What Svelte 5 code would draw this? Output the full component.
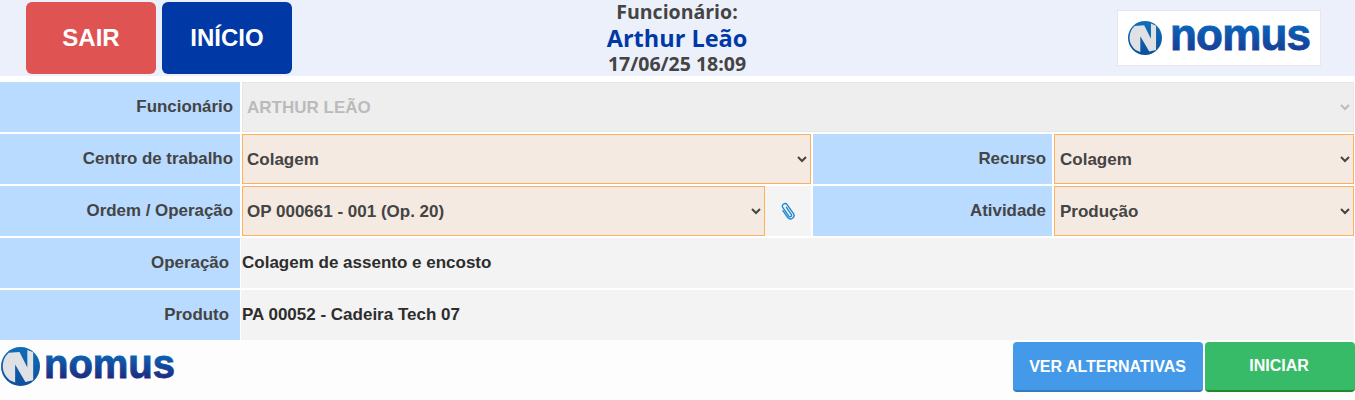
<script>
	let now = '17/06/25 18:09';
</script>

{#snippet logo(kind, w, h, base, size, len, from, to)}
	<div class="logo {kind}">
		<svg class="mark" viewBox="0 0 40 40">
			<defs>
				<linearGradient id="ring-{kind}" x1="0" y1="0" x2="0" y2="1">
					<stop offset="0" stop-color="#0f6fb8" />
					<stop offset="1" stop-color="#0d4f9e" />
				</linearGradient>
			</defs>
			<circle cx="20" cy="20" r="20" fill="url(#ring-{kind})" />
			<path d="M8 6 L19 5 L27 21 L27 3 L33 5.500 L33 34 L25 36 L14.500 18 L14.500 36.500 L9 34 A18 18 0 0 1 8 6 Z" fill="#dfe1e5" />
		</svg>
		<svg class="word" width={w} height={h}>
			<defs>
				<linearGradient id="word-{kind}" gradientUnits="userSpaceOnUse" x1="0" y1={base - size * 0.53} x2="0" y2={base}>
					<stop offset="0" stop-color={from} />
					<stop offset="1" stop-color={to} />
				</linearGradient>
			</defs>
			<text
				x="-2"
				y={base}
				font-size={size}
				textLength={len}
				lengthAdjust="spacing"
				fill="url(#word-{kind})"
				stroke="url(#word-{kind})"
				stroke-width="0.9">nomus</text>
		</svg>
	</div>
{/snippet}

<div class="page">
	<header class="top">
		<div class="top-actions">
			<button class="big sair">SAIR</button>
			<button class="big inicio">INÍCIO</button>
		</div>
		<div class="who">
			<div class="who-label">Funcionário:</div>
			<div class="who-name">Arthur Leão</div>
			<div class="who-date">{now}</div>
		</div>
		<div class="logo-box">
			{@render logo('small', 140, 30, 26, 44, 141, '#0b62b8', '#163f98')}
		</div>
	</header>

	<main class="form">
		<label class="lbl" for="func">Funcionário</label>
		<select id="func" class="sel wide" disabled>
			<option>ARTHUR LEÃO</option>
		</select>

		<label class="lbl" for="centro">Centro de trabalho</label>
		<select id="centro" class="sel">
			<option>Colagem</option>
		</select>
		<label class="lbl side" for="recurso">Recurso</label>
		<select id="recurso" class="sel side-sel">
			<option>Colagem</option>
		</select>

		<label class="lbl" for="ordem">Ordem / Operação</label>
		<div class="with-clip">
			<select id="ordem" class="sel">
				<option>OP 000661 - 001 (Op. 20)</option>
			</select>
			<div class="clip">
				<svg viewBox="0 0 18 20" width="17" height="18" fill="none" stroke="#1b87d2" stroke-width="1.500" stroke-linecap="round" stroke-linejoin="round">
					<path d="M7.500 6.500 L13 14.500 A1.700 1.700 0 0 1 10.200 16.400 L3.400 6.600 A2.900 2.900 0 0 1 8.200 3.400 L15.400 13.600 A3.900 3.900 0 0 1 9 18 L3.600 10.200" transform="translate(0.300 -0.600)" />
				</svg>
			</div>
		</div>
		<label class="lbl side" for="atividade">Atividade</label>
		<select id="atividade" class="sel side-sel">
			<option>Produção</option>
		</select>

		<div class="lbl inset">Operação</div>
		<div class="val">Colagem de assento e encosto</div>

		<div class="lbl inset">Produto</div>
		<div class="val">PA 00052 - Cadeira Tech 07</div>
	</main>

	<footer class="bottom">
		{@render logo('large', 132, 26, 24, 40, 131, '#0e5fb0', '#1c2c80')}
		<div class="bottom-actions">
			<button class="act alt">VER ALTERNATIVAS</button>
			<button class="act go">INICIAR</button>
		</div>
	</footer>
</div>

<style>
	:global(body) {
		margin: 0;
		background: #fff;
	}

	.page {
		width: 1355px;
		height: 400px;
		overflow: hidden;
		font-family: 'Liberation Sans', Arial, sans-serif;
		color: #444;
		background: #fff;
	}

	.top {
		height: 76px;
		background: #ecf0fb;
		display: grid;
		grid-template-columns: 1fr 300px 1fr;
		align-items: start;
	}

	.top-actions {
		display: flex;
		gap: 6px;
		padding: 2px 0 0 26px;
	}

	.big {
		width: 130px;
		height: 72px;
		border: none;
		border-radius: 6px;
		color: #fff;
		font: bold 24px 'Liberation Sans', Arial, sans-serif;
		padding: 0;
	}

	.sair {
		background: #df5353;
	}

	.inicio {
		background: #0039a6;
	}

	.who {
		text-align: center;
		font-family: 'Open Sans', sans-serif;
		font-weight: 700;
		font-size: 19.5px;
		line-height: 24px;
		color: #444;
		margin-left: -1px;
	}

	.who-name {
		font-size: 23.5px;
		line-height: 28px;
		color: #0039a6;
	}

	.who-date {
		line-height: 24px;
	}

	.logo-box {
		justify-self: end;
		margin: 10px 34px 0 0;
		box-sizing: border-box;
		width: 204px;
		height: 56px;
		background: #fff;
		border: 1px solid #e6e8ee;
		padding-left: 10px;
	}

	.logo {
		display: flex;
		align-items: flex-start;
	}

	.word {
		overflow: visible;
		font-family: 'Liberation Sans', Arial, sans-serif;
		font-weight: 700;
	}

	.small .mark {
		width: 34px;
		height: 34px;
		margin-top: 10px;
	}

	.small .word {
		margin: 13px 0 0 10px;
	}

	.large .mark {
		width: 39px;
		height: 39px;
		margin-top: 7px;
	}

	.large .word {
		margin: 14px 0 0 6px;
	}

	.form {
		margin-top: 6px;
		display: grid;
		grid-template-columns: 240px 569px 239px 300px;
		grid-auto-rows: 50px;
		column-gap: 2px;
		row-gap: 2px;
		width: 1354px;
		font-size: 17px;
		font-weight: 700;
	}

	.lbl {
		background: #b8dbff;
		color: #444;
		font-size: 16.9px;
		display: flex;
		align-items: center;
		justify-content: flex-end;
		padding-right: 7px;
	}

	.lbl.side {
		padding-right: 6px;
	}

	.lbl.inset {
		padding-right: 11px;
	}

	.sel {
		box-sizing: border-box;
		width: 100%;
		height: 50px;
		border: 1px solid #ffb05c;
		border-radius: 0;
		background-color: #f5eae1;
		color: #444;
		font: bold 17px 'Liberation Sans', Arial, sans-serif;
		padding: 0;
	}

	.side-sel {
		padding-left: 1px;
	}

	.wide {
		grid-column: 2 / -1;
		border-color: #e6e6e6;
		background-color: #eee;
		color: #bbb;
		opacity: 1;
	}

	.with-clip {
		display: flex;
		background: #f4f4f4;
	}

	.with-clip .sel {
		width: 523px;
		flex: none;
	}

	.clip {
		flex: 1;
		display: flex;
		align-items: center;
		justify-content: center;
		padding-right: 1px;
	}

	.val {
		grid-column: 2 / -1;
		margin-left: -1px;
		background: #f3f3f3;
		color: #2d2d2d;
		display: flex;
		align-items: center;
		padding-left: 1px;
	}

	.bottom {
		height: 60px;
		background: #fdfdfd;
		display: flex;
		justify-content: space-between;
		align-items: flex-start;
		padding-left: 1px;
	}

	.bottom-actions {
		display: flex;
		gap: 2px;
		padding-top: 2px;
	}

	.act {
		box-sizing: border-box;
		height: 50px;
		border: none;
		border-radius: 4px;
		color: #fff;
		font: bold 16px 'Liberation Sans', Arial, sans-serif;
		padding: 0;
	}

	.alt {
		width: 190px;
		background: #449ae8;
		border-bottom: 2px solid #337bbd;
		padding: 1px 1px 0 0;
	}

	.go {
		width: 150px;
		background: #38bb68;
		border-bottom: 2px solid #21862c;
		padding-right: 2px;
	}
</style>
